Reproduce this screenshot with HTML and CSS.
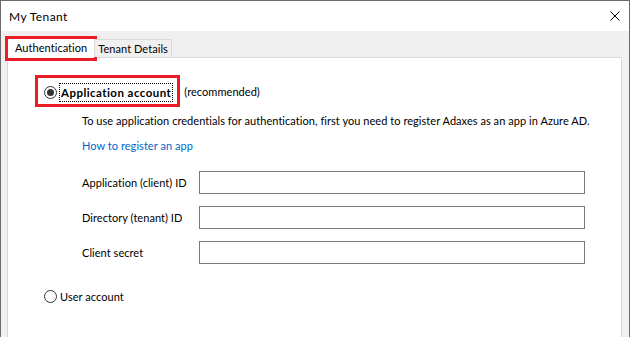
FILE: index.html
```html
<!DOCTYPE html>
<html lang="en">
<head>
    <meta charset="UTF-8">
    <title>My Tenant</title>
    <link rel="stylesheet" href="styles.css">
</head>
<body>
    <div class="window">
        <div class="titlebar">
            <span class="title">My Tenant</span>
            <svg class="close" width="10" height="10" viewBox="0 0 10 10">
                <path d="M0.5 0.5 L9.5 9.5 M9.5 0.5 L0.5 9.5" stroke="#000" stroke-width="1" fill="none"/>
            </svg>
        </div>
        <div class="dialog-body">
            <div class="tabs">
                <div class="tab active">Authentication</div>
                <div class="tab">Tenant Details</div>
            </div>
            <div class="panel">
                <div class="radio-row">
                    <span class="highlight">
                        <span class="radio checked"></span>
                        <span class="focus-label">Application account</span>
                    </span>
                    <span class="note">(recommended)</span>
                </div>
                <p class="desc">To use application credentials for authentication, first you need to register Adaxes as an app in Azure AD.</p>
                <a class="link" href="#">How to register an app</a>

                <div class="fields">
                    <div class="field">
                        <label for="client_id">Application (client) ID</label>
                        <input type="text" id="client_id">
                    </div>
                    <div class="field">
                        <label for="tenant_id">Directory (tenant) ID</label>
                        <input type="text" id="tenant_id">
                    </div>
                    <div class="field">
                        <label for="secret">Client secret</label>
                        <input type="text" id="secret">
                    </div>
                </div>

                <div class="radio-row user">
                    <span class="radio"></span>
                    <span class="plain-label">User account</span>
                </div>
            </div>
        </div>
    </div>
</body>
</html>
```

FILE: styles.css
```css
* {
    margin: 0;
    padding: 0;
    box-sizing: border-box;
}
body {
    font-family: 'Lato', 'Noto Sans', sans-serif;
    font-size: 11px;
    letter-spacing: 0.05px;
    color: #000;
    background-color: #f0f0f0;
    overflow: hidden;
    white-space: nowrap;
}
.window {
    width: 630px;
    height: 337px;
    border: 1px solid #6b6b6b;
    border-bottom: none;
    display: flex;
    flex-direction: column;
}
.titlebar {
    height: 30px;
    background-color: white;
    display: flex;
    align-items: center;
    justify-content: space-between;
    padding: 0 9px 0 8px;
    flex-shrink: 0;
}
.title {
    font-size: 12px;
    letter-spacing: 0.4px;
}
.dialog-body {
    flex: 1;
    background-color: #f0f0f0;
    padding: 8px 7px 0 6px;
    display: flex;
    flex-direction: column;
}
.tabs {
    display: flex;
    align-items: flex-end;
    padding-left: 1px;
    position: relative;
    z-index: 1;
}
.tab {
    height: 18px;
    padding: 0 3px;
    border: 1px solid #d9d9d9;
    border-bottom: none;
    background-color: #f0f0f0;
    line-height: 17px;
}
.tab.active {
    height: 19px;
    margin-bottom: -1px;
    padding: 0 7px;
    background-color: white;
    border: none;
    outline: 3px solid #ec1c24;
    line-height: 18px;
}
.panel {
    flex: 1;
    background-color: white;
    border: 1px solid #d9d9d9;
    border-bottom: none;
    padding: 20px 0 0 30px;
}
.radio-row {
    display: flex;
    align-items: center;
}
.highlight {
    display: inline-flex;
    align-items: center;
    padding: 5px 4px 2px 6px;
    outline: 3px solid #ec1c24;
}
.radio {
    width: 13px;
    height: 13px;
    border: 1px solid #333;
    border-radius: 50%;
    display: inline-flex;
    align-items: center;
    justify-content: center;
    background-color: white;
    flex-shrink: 0;
}
.radio.checked::after {
    content: '';
    width: 7px;
    height: 7px;
    border-radius: 50%;
    background-color: #333;
}
.focus-label {
    font-weight: bold;
    font-size: 11.5px;
    letter-spacing: 0.45px;
    border: 1px dotted #000;
    padding: 0 1px;
    margin-left: 2px;
    line-height: 17px;
}
.note {
    margin-left: 7px;
}
.desc {
    margin: 9px 0 0 44px;
    line-height: 16px;
}
.link {
    display: block;
    margin: 9px 0 0 44px;
    color: #0066cc;
    text-decoration: none;
    line-height: 16px;
}
.fields {
    margin: 17px 0 0 44px;
    display: flex;
    flex-direction: column;
    gap: 12px;
}
.field {
    display: flex;
    align-items: center;
}
.field label {
    width: 117px;
}
.field input {
    width: 386px;
    height: 23px;
    border: 1px solid #7a7a7a;
    font-family: inherit;
    font-size: 11px;
}
.radio-row.user {
    margin: 22px 0 0 6px;
    height: 20px;
}
.plain-label {
    margin-left: 3px;
}
```
